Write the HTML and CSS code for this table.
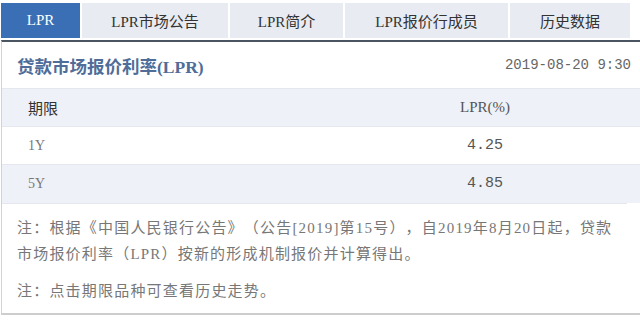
FILE: index.html
```html
<!DOCTYPE html>
<html lang="zh-CN">
<head>
<meta charset="utf-8">
<title>LPR</title>
<link rel="stylesheet" href="styles.css">
</head>
<body>
<div class="page">
  <nav class="tabs">
    <a class="tab tab-active tab-w1">LPR</a>
    <a class="tab tab-w2">LPR市场公告</a>
    <a class="tab tab-w3">LPR简介</a>
    <a class="tab tab-w4">LPR报价行成员</a>
    <a class="tab tab-w5">历史数据</a>
  </nav>
  <section class="panel">
    <header class="panel-head">
      <h1 class="title">贷款市场报价利率(LPR)</h1>
      <span class="date">2019-08-20 9:30</span>
    </header>
    <table class="rates">
      <thead>
        <tr><th class="col-term">期限</th><th class="col-rate">LPR(%)</th></tr>
      </thead>
      <tbody>
        <tr><td class="col-term">1Y</td><td class="col-rate num">4.25</td></tr>
        <tr class="alt"><td class="col-term">5Y</td><td class="col-rate num">4.85</td></tr>
      </tbody>
    </table>
    <div class="notes">
      <p class="note">注：根据《中国人民银行公告》（公告[2019]第15号），自2019年8月20日起，贷款市场报价利率（LPR）按新的形成机制报价并计算得出。</p>
      <p class="note note-last">注：点击期限品种可查看历史走势。</p>
    </div>
  </section>
</div>
</body>
</html>
```

FILE: styles.css
```css
html, body {
  margin: 0;
  padding: 0;
  background: #ffffff;
}

.page {
  width: 640px;
  overflow: hidden;
  padding-top: 3px;
  font-family: "Liberation Serif", "Noto Sans CJK SC", serif;
  color: #333;
}

.tabs {
  display: flex;
  gap: 2px;
  padding-left: 1px;
  height: 35px;
}

.tab {
  display: flex;
  align-items: center;
  justify-content: center;
  background: #e8ebf2;
  color: #333;
  font-size: 15px;
  text-decoration: none;
}

.tab-active {
  background: #3a6fb6;
  color: #ffffff;
}

.tab-w1 { width: 79px; }
.tab-w2 { width: 146px; }
.tab-w3 { width: 113px; }
.tab-w4 { width: 163px; }
.tab-w5 { width: 120px; }

.panel {
  margin-top: 2px;
  margin-left: 1px;
  width: 660px;
  border-top: 2px solid #4b5562;
  border-left: 1px solid #cfd2d6;
  border-bottom: 2px solid #cdcdcd;
}

.panel-head {
  display: flex;
  align-items: center;
  justify-content: space-between;
  height: 46px;
  padding-left: 15px;
  width: 614px;
}

.title {
  margin: 0;
  font-size: 17.5px;
  font-weight: bold;
  color: #4f6d98;
}

.date {
  font-family: "Liberation Mono", "Noto Sans CJK SC", monospace;
  font-size: 14px;
  color: #666;
}

.rates {
  width: 660px;
  border-collapse: collapse;
  font-size: 14px;
}

.rates th,
.rates td {
  height: 38px;
  padding: 0;
  font-weight: normal;
  border-top: 1px solid #e4e7ee;
  box-sizing: border-box;
}

.rates thead tr {
  background: #eef1f7;
}

.rates tbody tr.alt {
  background: #eef1f7;
}

.col-term {
  text-align: left;
  padding-left: 26px !important;
  width: 289px;
  color: #777;
}

.rates th.col-term {
  color: #333;
  font-size: 15px;
  font-family: "Noto Sans CJK SC", sans-serif;
}

.col-rate {
  text-align: left;
  color: #555;
}

.rates th.col-rate {
  padding-left: 169px !important;
  font-size: 15px;
}

.num {
  font-family: "Liberation Mono", monospace;
  font-size: 15px;
  padding-left: 176px !important;
}

.notes {
  border-top: 1px solid #e4e7ee;
  padding: 11px 0 9px 15px;
  width: 610px;
}

.note {
  margin: 0 0 11px 0;
  font-size: 15px;
  line-height: 26px;
  letter-spacing: 1.2px;
  text-spacing-trim: space-all;
  color: #777;
}

.note-last {
  margin-bottom: 0;
}
```
